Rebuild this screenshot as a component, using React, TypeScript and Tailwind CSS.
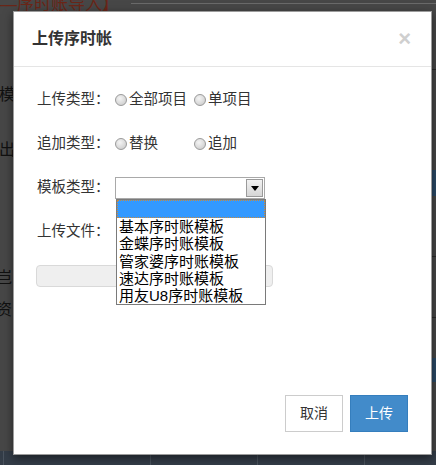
import React from "react";

const font = "font-['Liberation_Sans','Noto_Sans_CJK_SC',sans-serif]";

function Radio() {
  return (
    <span className="mr-[2px] inline-block h-[12px] w-[12px] shrink-0 rounded-full border border-[#9a9a9a] bg-[radial-gradient(circle_at_40%_35%,#f4f4f4_0%,#d4d4d4_70%,#bdbdbd_100%)]" />
  );
}

function Option({ label, wide }: { label: string; wide?: boolean }) {
  return (
    <span className={`flex items-center ${wide ? "w-[79px]" : ""}`}>
      <Radio />
      <span>{label}</span>
    </span>
  );
}

const templates = ["基本序时账模板", "金蝶序时账模板", "管家婆序时账模板", "速达序时账模板", "用友U8序时账模板"];

function TemplateSelect() {
  return (
    <div className="relative h-[22px] w-[150px]">
      <div className="flex h-full w-full items-center justify-end border border-[#a9a9a9] bg-white pr-[1px]">
        <div className="flex h-[18px] w-[17px] items-center justify-center border border-[#9a9a9a] bg-gradient-to-b from-[#f2f2f2] to-[#d6d6d6]">
          <span className="h-0 w-0 border-x-[4px] border-t-[5px] border-x-transparent border-t-black" />
        </div>
      </div>
      {/* open dropdown list */}
      <ul className="absolute left-[1px] top-full z-10 w-[150px] border border-[#7a7a7a] bg-white text-[15px] leading-[17.3px] text-black">
        <li className="h-[18px] border border-dotted border-[#c98a3c] bg-[#3399ff]" />
        {templates.map((t) => (
          <li key={t} className="h-[17.3px] whitespace-nowrap pl-[2px]">
            {t}
          </li>
        ))}
      </ul>
    </div>
  );
}

function Row({ label, children }: { label: string; children?: React.ReactNode }) {
  return (
    <div className="flex h-[22px] items-center">
      <span className="w-[78px] shrink-0">{label}</span>
      {children}
    </div>
  );
}

function UploadDialog() {
  return (
    <div className={`absolute left-[13px] top-[11px] flex h-[444px] w-[419px] flex-col border border-[#9c9c9c] bg-white shadow-[0_3px_9px_rgba(0,0,0,0.5)] ${font}`}>
      <div className="flex h-[55px] shrink-0 items-center justify-between border-b border-[#e5e5e5] pl-[18px] pr-[20px]">
        <h4 className="text-[16px] font-bold text-[#333]">上传序时帐</h4>
        <span className="text-[22px] font-bold leading-none text-[#cfcfcf]">×</span>
      </div>
      <div className="flex flex-1 flex-col gap-[22px] pl-[23px] pt-[22px] text-[14.5px] text-[#333]">
        <Row label="上传类型：">
          <Option label="全部项目" wide />
          <Option label="单项目" />
        </Row>
        <Row label="追加类型：">
          <Option label="替换" wide />
          <Option label="追加" />
        </Row>
        <Row label="模板类型：">
          <TemplateSelect />
        </Row>
        <Row label="上传文件：" />
        <div className="ml-[-1px] h-[22px] w-[237px] rounded-[4px] border border-[#d9d9d9] bg-[#efefef]" />
      </div>
      <div className="flex shrink-0 justify-end gap-[7px] pb-[22px] pr-[23px] text-[14px]">
        <button className="h-[37px] w-[58px] border border-[#ccc] bg-white text-[#333]">取消</button>
        <button className="h-[37px] w-[58px] border border-[#357ebd] bg-[#428bca] text-white">上传</button>
      </div>
    </div>
  );
}

function BackgroundPage() {
  return (
    <div className={`flex h-full w-full flex-col bg-[#474747] ${font}`}>
      <div className="flex h-[11px] shrink-0 items-start overflow-hidden">
        <span className="mt-[-5px] whitespace-nowrap text-[17px] leading-[20px] text-[#6a2618]">—序时账导入】</span>
        <span className="ml-[12px] mt-[3px] h-[1px] flex-1 bg-[#6a6a6a]" />
      </div>
      <div className="flex flex-1">
        <div className="flex w-[13px] shrink-0 flex-col overflow-hidden text-[16px] leading-[18px] text-[#111]">
          <span className="mt-[75px] ml-[-1px] whitespace-nowrap">模</span>
          <span className="mt-[37px] ml-[-1px] whitespace-nowrap">出</span>
          <span className="mt-[110px] ml-[-4px] whitespace-nowrap">岂司</span>
          <span className="mt-[14px] ml-[-4px] whitespace-nowrap">资</span>
        </div>
        <div className="flex-1" />
        <div className="flex w-[6px] shrink-0 flex-col">
          <div className="mt-[58px] h-[1px] bg-[#2a2a2a]" />
          <div className="mt-[100px] h-[26px] bg-[#2b4a66]" />
          <div className="mt-[60px] h-[1px] bg-[#2a2a2a]" />
          <div className="mt-[60px] h-[1px] bg-[#2a2a2a]" />
          <div className="mt-[40px] h-[24px] bg-[#2b4a66]" />
        </div>
      </div>
      <div className="flex h-[14px] shrink-0 bg-[#343d48]">
        <span className="ml-[3px] w-[1px] bg-[#4a535e]" />
        <span className="ml-[146px] w-[1px] bg-[#4a535e]" />
        <span className="ml-[106px] w-[1px] bg-[#4a535e]" />
        <span className="ml-[106px] w-[1px] bg-[#4a535e]" />
      </div>
    </div>
  );
}

export default function App() {
  return (
    <div className="relative h-[465px] w-[436px] overflow-hidden">
      <BackgroundPage />
      <UploadDialog />
    </div>
  );
}
